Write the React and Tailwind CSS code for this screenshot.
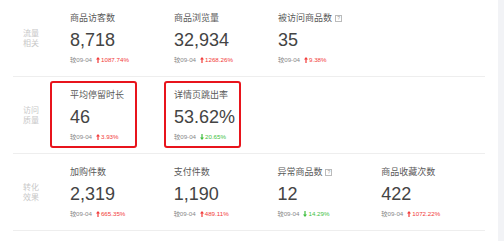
const rows = [
  {
    label: ['流量', '相关'],
    items: [
      { title: '商品访客数', value: '8,718', pct: '1087.74%', up: true },
      { title: '商品浏览量', value: '32,934', pct: '1268.26%', up: true },
      { title: '被访问商品数', value: '35', pct: '9.38%', up: true, help: true },
    ],
  },
  {
    label: ['访问', '质量'],
    boxed: true,
    items: [
      { title: '平均停留时长', value: '46', pct: '3.93%', up: true },
      { title: '详情页跳出率', value: '53.62%', pct: '20.65%', up: false },
    ],
  },
  {
    label: ['转化', '效果'],
    items: [
      { title: '加购件数', value: '2,319', pct: '665.35%', up: true },
      { title: '支付件数', value: '1,190', pct: '489.11%', up: true },
      { title: '异常商品数', value: '12', pct: '14.29%', up: false, help: true },
      { title: '商品收藏次数', value: '422', pct: '1072.22%', up: true },
    ],
  },
];

function Arrow({ up }) {
  return (
    <svg width="4" height="6" viewBox="0 0 4 6" className="mr-[1px]">
      {up ? (
        <path d="M2 0 L4 2.6 L2.6 2.6 L2.6 6 L1.4 6 L1.4 2.6 L0 2.6 Z" fill="#f23a3a" />
      ) : (
        <path d="M2 6 L4 3.4 L2.6 3.4 L2.6 0 L1.4 0 L1.4 3.4 L0 3.4 Z" fill="#3fbf3f" />
      )}
    </svg>
  );
}

function Metric({ item }) {
  return (
    <div className="flex flex-col">
      <div className="flex items-center h-[12px] text-[9px] leading-[12px] text-[#5a5a5a]" style={{ fontFamily: '"Noto Sans CJK SC", sans-serif' }}>
        {item.title}
        {item.help && (
          <span className="ml-[3px] flex items-center justify-center w-[7px] h-[7px] border border-[#bbb] text-[5px] leading-none text-[#999]" style={{ fontFamily: '"Liberation Sans", sans-serif' }}>
            ?
          </span>
        )}
      </div>
      <div className="mt-[5px] h-[22px] text-[18px] leading-[22px] text-[#444]" style={{ fontFamily: '"Liberation Sans", sans-serif' }}>
        {item.value}
      </div>
      <div className="mt-[5px] flex items-center h-[8px] text-[6.2px] leading-[8px] text-[#888]" style={{ fontFamily: '"Liberation Sans", "Noto Sans CJK SC", sans-serif' }}>
        <span>较09-04</span>
        <span className="ml-[4px] flex items-center">
          <Arrow up={item.up} />
          <span className={item.up ? 'text-[#f23a3a]' : 'text-[#3fbf3f]'}>{item.pct}</span>
        </span>
      </div>
    </div>
  );
}

export default function App() {
  return (
    <div className="flex w-[504px] h-[241px] bg-white overflow-hidden">
      <div className="w-[498px] pl-[13px] pr-[13px]">
        {rows.map((row, ri) => (
          <div key={ri} className="flex h-[77px] border-b border-[#eeeeee]">
            <div className="w-[57px] pl-[10px] flex items-center">
              <p className="text-[8px] leading-[10px] text-[#c8c8c8]" style={{ fontFamily: '"Noto Sans CJK SC", sans-serif' }}>
                {row.label[0]}
                <br />
                {row.label[1]}
              </p>
            </div>
            {row.items.map((item, i) =>
              row.boxed ? (
                <div key={i} className="w-[104px] pt-[4px]">
                  <div className={`h-[67px] border-2 border-[#e8141c] rounded-[3px] pt-[6px] ${i === 0 ? 'ml-[-20px] w-[87px] pl-[18px]' : 'ml-[-10px] w-[77px] pl-[8px]'}`}>
                    <Metric item={item} />
                  </div>
                </div>
              ) : (
                <div key={i} className="w-[104px] pt-[12px]">
                  <Metric item={item} />
                </div>
              )
            )}
          </div>
        ))}
      </div>
      <div className="flex-1 bg-[#f2f3f6]" />
    </div>
  );
}
